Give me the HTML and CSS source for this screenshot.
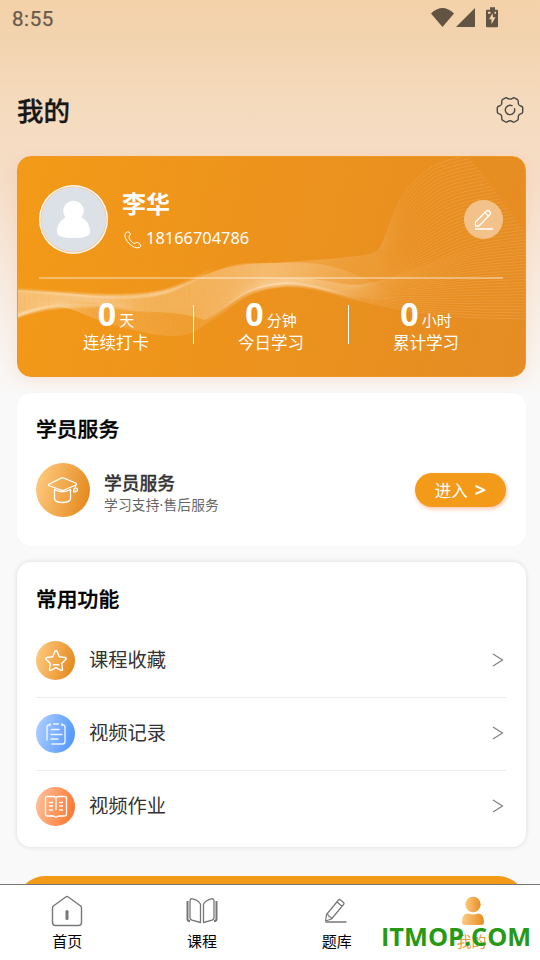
FILE: index.html
```html
<!DOCTYPE html>
<html lang="zh-CN">
<head>
<meta charset="utf-8">
<title>我的</title>
<link rel="stylesheet" href="styles.css">
</head>
<body>
<div class="app">
  <div class="status">
    <span class="clock">8:55</span>
    <svg class="status-icons" width="68" height="20" viewBox="0 0 68 20" fill="#625442">
      <path d="M0 5.500Q11.500-5.500 23 5.500L11.500 19z"/>
      <path d="M44 0v19H25z"/>
      <path fill-rule="evenodd" d="M59-1h5v2.500h2q1 0 1 1V18q0 1-1 1H56q-1 0-1-1V2.500q0-1 1-1h3zM57 3.500v2h2.500v-2zM63.500 3.500v2H65v-2zM61.500 5l-3.500 6h2.500v5l4-7H62z" transform="translate(0 .3)"/>
    </svg>
  </div>
  <main class="content">
    <header class="header">
      <h1>我的</h1>
      <svg width="28" height="28" viewBox="0 0 28 28" fill="none" stroke="#4b4844" stroke-width="1.400" stroke-linejoin="round" stroke-linecap="round">
        <path d="M9.600 1.900C11.200 1.200 11.700 3.100 14 3.100S16.800 1.200 18.400 1.900L21.600 3.700C23 4.800 21.700 6.300 22.600 8.500C23.700 10.400 26 9.700 26.700 11.500V16.300C26 18.200 23.700 17.500 22.600 19.400C21.700 21.600 23 23 21.600 24.200L18.400 26C16.800 26.700 16.300 24.800 14 24.800S11.200 26.700 9.600 26L6.400 24.200C5 23 6.300 21.600 5.400 19.400C4.300 17.500 2 18.200 1.300 16.300V11.500C2 9.700 4.300 10.400 5.400 8.500C6.300 6.300 5 4.800 6.400 3.700z"/>
        <path d="M16 9.700A4.700 4.700 0 1 0 18.500 12.600"/>
      </svg>
    </header>

    <section class="profile">
      <svg class="waves" id="waves" width="509" height="221" viewBox="17 156 509 221">
        <defs>
          <linearGradient id="fold0" gradientUnits="userSpaceOnUse" x1="17" x2="140" y1="0" y2="0"><stop stop-color="#fff0dc"/><stop offset="1" stop-color="#fff0dc" stop-opacity="0"/></linearGradient>
          <linearGradient id="fold1" gradientUnits="userSpaceOnUse" x1="17" x2="215" y1="0" y2="0"><stop stop-color="#fff0dc" stop-opacity=".3"/><stop offset=".7" stop-color="#fff0dc"/><stop offset="1" stop-color="#fff0dc" stop-opacity="0"/></linearGradient>
          <linearGradient id="fold2" gradientUnits="userSpaceOnUse" x1="205" x2="365" y1="0" y2="0"><stop stop-color="#fff0dc" stop-opacity="0"/><stop offset=".45" stop-color="#fff0dc"/><stop offset="1" stop-color="#fff0dc" stop-opacity="0"/></linearGradient>
          <linearGradient id="band" gradientUnits="userSpaceOnUse" x1="17" x2="400" y1="0" y2="0"><stop stop-color="#ffe6c4" stop-opacity=".35"/><stop offset=".35" stop-color="#ffe6c4" stop-opacity=".2"/><stop offset=".65" stop-color="#ffe6c4" stop-opacity=".35"/><stop offset="1" stop-color="#ffe6c4" stop-opacity="0"/></linearGradient>
        </defs>
        <path fill="url(#band)" d="M17 290C80 294 135 302 170 290C205 277 215 263 275 263C310 262 345 260 400 300C350 302 320 284 285 284C240 288 232 306 205 320C170 308 140 315 105 307C75 303 50 303 17 317z"/>
      </svg>
      <div class="user">
        <svg class="avatar" width="69" height="69" viewBox="0 0 69 69">
          <circle cx="34.500" cy="34.500" r="34.500" fill="#fff"/>
          <circle cx="34.500" cy="34.500" r="33.300" fill="#f9cda4"/>
          <circle cx="34.500" cy="34.500" r="32.200" fill="#dce0e7"/>
          <path d="M18 47C18 39 22 35 26.500 32.500A10.300 10.300 0 1 1 42.500 32.500C47 35 51 39 51 47Q51 53 34.500 53T18 47z" fill="#fff"/>
        </svg>
        <div class="who">
          <div class="name">李华</div>
          <div class="phone">
            <svg width="18" height="18" viewBox="0 0 18 18" fill="none" stroke="#fff" stroke-width="1"><path d="M1.200 2.500Q3-.3 5.300 1.200T5.200 5.500C4 7 8.500 12.800 11 12.500C12.300 11.700 12.800 10.800 14.300 11.900L16.500 13.600Q17.500 15 15.500 16.500C9.500 19-1 8.500 1.200 2.500z"/></svg>
            <span>18166704786</span>
          </div>
        </div>
        <div class="edit">
          <svg width="20" height="22" viewBox="0 0 20 22" fill="none" stroke="#fff" stroke-width="1.300" stroke-linecap="round" stroke-linejoin="round"><path d="M1.500 17V13L12.500 2Q14 .8 15.600 2.300T16 5.500L5 17zM11 3.600l3.400 3.500M1.500 20h17"/></svg>
        </div>
      </div>
      <div class="stats">
        <div class="stat"><div class="value"><b>0</b><span>天</span></div><div class="label">连续打卡</div></div>
        <div class="stat"><div class="value"><b>0</b><span>分钟</span></div><div class="label">今日学习</div></div>
        <div class="stat"><div class="value"><b>0</b><span>小时</span></div><div class="label">累计学习</div></div>
      </div>
    </section>

    <section class="card service">
      <h2>学员服务</h2>
      <div class="service-row">
        <div class="icon big amber">
          <svg width="32" height="28" viewBox="0 0 32 28" fill="none" stroke="#fff" stroke-width="1.300" stroke-linejoin="round" stroke-linecap="round"><path d="M1.500 8.500L14 2.200Q15.500 1.500 17 2.200L29.500 7.500Q30 8.300 29 9L17 14Q15.500 14.700 14 14L1.500 9.500zM7.500 13.500V23Q8.500 26.500 15.500 26.500T23.500 23V13.500M7.500 13.500Q15.500 18 23.500 13.500M28.500 9.200v2.300M28.500 11.500l-1.800 2v2.500q1.600-.2 1.800-1q.2 1 1.800 0v-2z"/></svg>
        </div>
        <div class="service-text"><strong>学员服务</strong><span>学习支持·售后服务</span></div>
        <div class="enter"><span>进入</span><b>&gt;</b></div>
      </div>
    </section>

    <section class="card functions">
      <h2>常用功能</h2>
      <div class="row">
        <div class="icon amber"><svg width="24" height="24" viewBox="0 0 24 24" fill="none" stroke="#fff" stroke-width="1.400" stroke-linejoin="round" stroke-linecap="round"><path d="M11 2.200Q12 .8 13 2.200L15.300 7.700L21 8.500Q23 9.200 21.700 10.500L17.700 14.500L18.500 20.300Q18.200 22 16.700 21.200L12 18.700L7.300 21.200Q5.700 22 5.500 20.300L6.300 14.500L2.300 10.500Q1 9.200 3 8.500L8.700 7.700zM9.200 15.700h5.600"/></svg></div>
        <span>课程收藏</span>
        <svg class="chev" width="12" height="14" viewBox="0 0 12 14"><path d="M1 1l9.500 6L1 13"/></svg>
      </div>
      <div class="row">
        <div class="icon blue"><svg width="22" height="24" viewBox="0 0 22 24" fill="none" stroke="#fff" stroke-opacity=".85" stroke-width="1.400" stroke-linecap="round"><path d="M4 3Q2 3 2 5v13M5 3.500V1.700M8.500 2h5M17 1.700V3.500M18 3Q20 3 20 5v14.500q0 2.500-2.500 2.500H7M6.500 7.500H14M6 12.500H17M6 17H13"/></svg></div>
        <span>视频记录</span>
        <svg class="chev" width="12" height="14" viewBox="0 0 12 14"><path d="M1 1l9.500 6L1 13"/></svg>
      </div>
      <div class="row">
        <div class="icon orange"><svg width="24" height="24" viewBox="0 0 24 24" fill="none" stroke="#fff" stroke-width="1.300" stroke-linecap="round" stroke-linejoin="round"><path d="M12 14.500V4Q12 1.500 9.500 1.500H3Q1.500 1.500 1.500 3.500V19Q1.500 21 3.500 21H9Q10 21 12 22.500Q14 21 15 21H20.500Q22.500 21 22.500 19V3.500Q22.500 1.500 21 1.500H14.500Q12 1.500 12 4M5.500 7.500h3M5.500 11h3M5.500 15h3M15.500 7.500h3M15.500 11h3M15.500 15h3"/></svg></div>
        <span>视频作业</span>
        <svg class="chev" width="12" height="14" viewBox="0 0 12 14"><path d="M1 1l9.500 6L1 13"/></svg>
      </div>
    </section>
    <div class="bottom-button"></div>
  </main>

  <nav class="tabs">
    <div class="tab">
      <svg width="32" height="32" viewBox="0 0 32 32" fill="none" stroke="#777" stroke-width="1.400" stroke-linejoin="round"><path d="M1.500 13Q1.500 11.500 2.700 10.700L14.700 2Q16 1 17.300 2L29.300 10.700Q30.500 11.500 30.500 13V27.500Q30.500 30.500 27.500 30.500H4.500Q1.500 30.500 1.500 27.500z"/><path d="M16 16.500v7" stroke-width="3" stroke-linecap="round"/></svg>
      <span>首页</span>
    </div>
    <div class="tab">
      <svg width="32" height="32" viewBox="0 0 32 32" fill="none" stroke="#777" stroke-width="1.300" stroke-linejoin="round"><path d="M4 6Q4 3.500 6.500 3.800Q12 4.800 14.500 9V27.500L6 25.200Q4 24.500 4 22.500zM28 6Q28 3.500 25.500 3.800Q20 4.800 17.500 9V27.500L26 25.200Q28 24.500 28 22.500z"/><path d="M1.500 6v18q0 2 2.500 2.200M30.500 6v18q0 2-2.500 2.200" stroke-width="2"/></svg>
      <span>课程</span>
    </div>
    <div class="tab">
      <svg width="32" height="32" viewBox="0 0 32 32" fill="none" stroke="#777" stroke-width="1.200" stroke-linejoin="round"><path d="M4.500 26L5.500 19.500L17.500 5Q18.500 4 19.500 5L22.500 7.500Q23.500 8.500 22.500 9.500L10.500 24zM16 7l5 4.300M5.500 19.500q3 0 2.500 2.300q2.300-.3 2.500 2.200"/><path d="M4.500 27h21" stroke-width="1.500"/></svg>
      <span>题库</span>
    </div>
    <div class="tab active">
      <svg width="32" height="32" viewBox="-1 0 32 32"><defs><linearGradient id="person"><stop stop-color="#ffca80"/><stop offset="1" stop-color="#e68d24"/></linearGradient></defs><g fill="url(#person)"><circle cx="16" cy="9.500" r="7.700"/><path d="M5 27Q5 18.500 11 18.500Q16 20.500 21 18.500Q27 18.500 27 27Q27 30 24 30H8Q5 30 5 27z"/></g></svg>
      <span>我的</span>
    </div>
  </nav>
  <div class="watermark">ITMOP.COM</div>
</div>
<script src="waves.js"></script>
</body>
</html>
```
FILE: styles.css
```css
* { box-sizing: border-box; }
body { margin: 0; font-family: "Noto Sans", "Noto Sans CJK SC", sans-serif; color: #000; }
h1, h2 { margin: 0; font-family: "Noto Sans CJK SC", sans-serif; }
svg { display: block; flex: none; }

.app {
  position: relative;
  display: flex;
  flex-direction: column;
  width: 540px;
  height: 960px;
  overflow: hidden;
  background: linear-gradient(#f4d1a8 0, #f2d3ae 30px, #f5dcc0 120px, #f5ddc7 180px, #f8f1eb 330px, #f9f9f9 400px);
}
.status { flex: none; display: flex; justify-content: space-between; height: 36px; padding: 8px 41px 0 12px; }
.status-icons { overflow: visible; }
.clock { font: 400 20.5px/22px Roboto, sans-serif; letter-spacing: .6px; color: #68594a; -webkit-text-stroke: .25px; }
.content { flex: 1; min-height: 0; overflow: hidden; padding: 28px 14px 0 17px; }
.header { display: flex; align-items: center; justify-content: space-between; height: 92px; padding-right: 2px; }
h1 { font-size: 26.5px; line-height: 36px; font-weight: 500; color: #171717; -webkit-text-stroke: .35px; }

.profile {
  position: relative;
  height: 221px;
  padding: 28px 22px 0 21px;
  border: 1px solid #ef9722;
  border-radius: 14px;
  overflow: hidden;
  color: #fff;
  background: linear-gradient(105deg, #f39a18, #ec921d 52%, #e58c24);
  box-shadow: 0 4px 16px rgba(248, 146, 90, .16);
}
.waves { position: absolute; left: -1px; top: -1px; }
.user { position: relative; display: flex; align-items: center; height: 69px; }
.who { flex: 1; padding-left: 14px; }
.name { font: 700 24px/36px "Noto Sans CJK SC", sans-serif; margin-top: -1px; }
.phone { display: flex; align-items: center; gap: 4px; height: 33px; padding: 2px 0 0 2px; font-size: 16.4px; }
.phone svg { margin-top: 4px; }
.phone span { line-height: 22px; }
.edit { display: flex; align-items: center; justify-content: center; width: 39px; height: 39px; border-radius: 50%; background: #f3c28b; }
.stats { position: relative; display: flex; margin-top: 23px; padding-top: 26px; border-top: 2px solid rgba(255, 255, 255, .36); }
.stat { flex: 1; height: 39px; text-align: center; }
.stat + .stat { border-left: 1px solid #fff; }
.value { display: flex; align-items: baseline; justify-content: center; gap: 3px; height: 26px; margin-top: -1px; line-height: 20px; }
.value b { font-size: 32px; }
.value span { font: 15px/20px "Noto Sans CJK SC", sans-serif; }
.label { font: 16.5px/24px "Noto Sans CJK SC", sans-serif; }

.card { margin-top: 16px; padding: 0 20px 0 19px; border-radius: 14px; background: #fff; box-shadow: 0 0 3px rgba(0, 0, 0, .025); }
h2 { padding-top: 20px; font-size: 20.8px; line-height: 30px; font-weight: 500; -webkit-text-stroke: .35px; }
.service { height: 153px; }
.service-row { display: flex; align-items: center; height: 54px; margin-top: 20px; }
.icon { flex: none; display: flex; align-items: center; justify-content: center; width: 39px; height: 39px; border-radius: 50%; }
.big { width: 54px; height: 54px; }
.amber { background: linear-gradient(105deg, #ffca80 5%, #e48a1e 92%); }
.blue { background: linear-gradient(105deg, #adceff 5%, #5197ff 92%); }
.orange { background: linear-gradient(105deg, #ffc09a 5%, #fe762e 92%); }
.service-text { flex: 1; display: flex; flex-direction: column; padding: 3px 0 0 14px; }
.service-text strong { font: 500 17.8px/26px "Noto Sans CJK SC", sans-serif; color: #333; -webkit-text-stroke: .3px; }
.service-text span { font-size: 13.7px; line-height: 20px; letter-spacing: .2px; color: #666; }
.enter { display: flex; align-items: center; justify-content: center; gap: 7px; width: 91px; height: 34px; border-radius: 17px; background: #f39a18; color: #fff; font-size: 16.5px; box-shadow: 1px 2px 4px rgba(255, 112, 30, .4); }
.enter span { font-family: "Noto Sans CJK SC", sans-serif; line-height: 24px; }
.enter b { font-size: 20px; line-height: 24px; }
.functions { height: 285px; box-shadow: 0 0 5px rgba(0, 0, 0, .13); }
.functions h2 { padding-top: 21px; margin-bottom: 11px; }
.row { display: flex; align-items: center; height: 73px; padding-right: 2px; }
.row + .row { padding-bottom: 1px; border-top: 1px solid #ececec; }
.row span { flex: 1; margin-top: -3px; padding-left: 14px; font: 19.3px/28px "Noto Sans CJK SC", sans-serif; color: #333; }
.chev { margin-top: -1px; fill: none; stroke: #808080; stroke-width: 1.2; }
.bottom-button { height: 56px; margin-top: 29px; border-radius: 28px; background: #f39a18; }

.tabs { flex: none; display: flex; height: 76px; padding-right: 1px; border-top: 1px solid #777; background: #fff; }
.tab { flex: 1; display: flex; flex-direction: column; align-items: center; padding-top: 10px; }
.tab span { margin-top: 3px; font: 15px/22px "Noto Sans CJK SC", sans-serif; }
.active { color: #ed9a38; }
.watermark { position: absolute; left: 381px; top: 918px; font: 700 25.3px/36px "Open Sans", sans-serif; color: #269a15; }
```
FILE: waves.js
```js
// Each station lists the upper, middle and lower positions of the ribbon.
const stations = [
  [[17,290],[17,303],[17,317]],
  [[60,293],[60,301],[60,307]],
  [[105,297],[105,304],[105,322]],
  [[150,296],[150,313],[155,334]],
  [[195,280],[195,304],[190,333]],
  [[235,265],[227,288],[220,312]],
  [[275,263],[260,280],[250,291]],
  [[330,259],[310,279],[290,284]],
  [[371,254],[355,285],[335,293]],
  [[382,244],[382,280],[365,302]],
  [[400,200],[430,263],[410,311]],
  [[430,168],[475,246],[465,317]],
  [[468,155],[530,238],[530,319]]
];
const COUNT = 54;
const mix = (a, b, t) => a + (b - a) * t;
const svg = document.getElementById("waves");

function stroke(d, color, opacity, width) {
  const path = document.createElementNS("http://www.w3.org/2000/svg", "path");
  path.setAttribute("d", d);
  path.setAttribute("fill", "none");
  path.setAttribute("stroke", color);
  path.setAttribute("stroke-opacity", opacity);
  path.setAttribute("stroke-width", width);
  svg.appendChild(path);
}

for (let i = 0; i < COUNT; i++) {
  const t = i / (COUNT - 1) * 2;
  const k = t < 1 ? 0 : 1;
  const p = stations.map(s => [mix(s[k][0], s[k + 1][0], t - k), mix(s[k][1], s[k + 1][1], t - k)]);
  let d = `M${p[0]}`;
  for (let j = 0; j < p.length - 1; j++) {
    const a = p[Math.max(0, j - 1)], b = p[j], c = p[j + 1], e = p[Math.min(p.length - 1, j + 2)];
    const s = j === 8 || j === 9 ? 10 : 6;
    d += `C${b[0] + (c[0] - a[0]) / s},${b[1] + (c[1] - a[1]) / s} ${c[0] - (e[0] - b[0]) / s},${c[1] - (e[1] - b[1]) / s} ${c}`;
  }
  stroke(d, "#ffe6c4", ".19", ".8");
}

// Bright folds along the ribbon.
[
  "M17 316C50 303 78 306 140 306",
  "M17 290C80 294 135 302 170 290C195 281 205 272 220 266",
  "M205 324C232 306 240 288 285 284.500C315 284 330 292 370 303"
].forEach((d, f) => {
  for (let n = 0; n < 4; n++) stroke(d, `url(#fold${f})`, ".18", String(.8 + n * 1.6));
});
```
